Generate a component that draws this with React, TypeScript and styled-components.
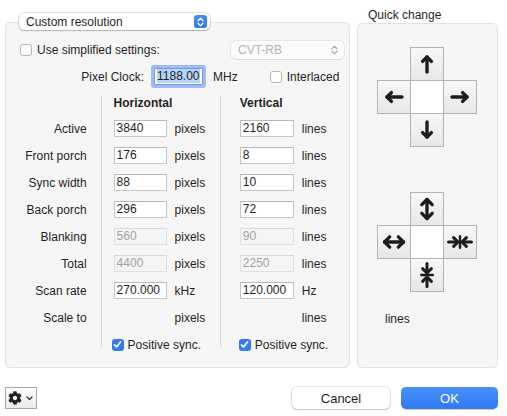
import React from 'react';
import styled, { createGlobalStyle } from 'styled-components';
import { FaCog } from 'react-icons/fa';

const GlobalStyle = createGlobalStyle`
  html, body {
    margin: 0;
    padding: 0;
    background: #ffffff;
  }
  body {
    font-family: "Liberation Sans", Arial, sans-serif;
    font-size: 12px;
    color: #1f1f1f;
  }
  * {
    box-sizing: border-box;
  }
`;

const Window = styled.div`
  width: 507px;
  height: 416px;
  display: flex;
  flex-direction: column;
  padding: 8px 9px 0 5px;
`;

const TopArea = styled.div`
  display: flex;
  align-items: flex-start;
  gap: 7px;
`;

const LeftColumn = styled.div`
  width: 345px;
  padding-top: 5px;
  display: flex;
  flex-direction: column;
`;

const RightColumn = styled.div`
  width: 141px;
  display: flex;
  flex-direction: column;
`;

const PopupButton = styled.div<{ $width: number; $disabled?: boolean }>`
  position: relative;
  z-index: 1;
  width: ${p => p.$width}px;
  height: ${p => (p.$disabled ? 18 : 17)}px;
  display: flex;
  align-items: center;
  justify-content: space-between;
  padding: 0 3px 0 7px;
  border-radius: 5px;
  background: ${p => (p.$disabled ? 'rgba(255,255,255,0.55)' : '#ffffff')};
  color: ${p => (p.$disabled ? '#b3b3b3' : '#1f1f1f')};
  box-shadow: ${p =>
    p.$disabled
      ? '0 0 0 0.5px rgba(0,0,0,0.1), 0 0.5px 1px rgba(0,0,0,0.06)'
      : '0 0 0 0.5px rgba(0,0,0,0.22), 0 1px 1.5px rgba(0,0,0,0.18)'};
`;

const TitlePopup = styled(PopupButton)`
  margin-left: 14px;
`;

const Stepper = styled.span<{ $active?: boolean }>`
  width: 13px;
  height: 13px;
  border-radius: 3px;
  background: ${p => (p.$active ? 'linear-gradient(#4a8ff8, #2a78f5)' : 'transparent')};
  display: flex;
  align-items: center;
  justify-content: center;
`;

const Panel = styled.div`
  background: #f6f6f6;
  border: 1px solid #e3e3e3;
  border-radius: 5px;
`;

const MainPanel = styled(Panel)`
  margin-top: -8px;
  height: 346px;
  padding: 17px 5px 9px 0;
  display: flex;
  flex-direction: column;
`;

const OptionRow = styled.div`
  height: 19px;
  display: flex;
  align-items: center;
  justify-content: space-between;
  padding-left: 14px;
`;

const Inline = styled.label`
  display: flex;
  align-items: center;
  gap: 5px;
`;

const ClockRow = styled.div`
  margin-top: 6px;
  height: 23px;
  display: flex;
  align-items: center;
  padding-left: 14px;
`;

const ClockLabel = styled.span`
  width: 124px;
  text-align: right;
`;

const FocusField = styled.div`
  margin-left: 10px;
  width: 49px;
  height: 17px;
  padding: 0 2px;
  line-height: 15px;
  background: #ffffff;
  border: 1px solid #6f99f1;
  box-shadow: 0 0 0 3px rgba(104, 148, 241, 0.6);
  border-radius: 1px;
`;

const Selected = styled.span`
  background: #b3d4fd;
`;

const Unit = styled.span<{ $gap?: number }>`
  margin-left: ${p => p.$gap ?? 8}px;
`;

const InterlacedBox = styled(Inline)`
  margin-left: 32px;
`;

const Check = styled.span<{ $checked?: boolean }>`
  flex: none;
  width: 12px;
  height: 12px;
  border-radius: 3px;
  display: inline-flex;
  align-items: center;
  justify-content: center;
  background: ${p => (p.$checked ? '#2f7cf6' : '#ffffff')};
  border: ${p => (p.$checked ? 'none' : '1px solid #b5b5b5')};
`;

const Table = styled.div`
  margin-top: 3px;
  display: flex;
`;

const LabelColumn = styled.div`
  width: 96px;
  padding-right: 14px;
  text-align: right;
`;

const DataColumn = styled.div<{ $width: number; $pad: number }>`
  position: relative;
  width: ${p => p.$width}px;
  padding-left: ${p => p.$pad}px;

  &::before {
    content: '';
    position: absolute;
    left: 0;
    top: 5px;
    bottom: 11px;
    width: 1px;
    background: #d9d9d9;
  }
`;

const Row = styled.div`
  height: 27px;
  display: flex;
  align-items: center;
`;

const LabelRow = styled(Row)`
  justify-content: flex-end;
`;

const HeaderRow = styled.div`
  height: 24px;
  display: flex;
  align-items: center;
  font-weight: bold;
`;

const Field = styled.div<{ $width: number; $disabled?: boolean }>`
  width: ${p => p.$width}px;
  height: 17px;
  padding: 0 2px;
  line-height: 15px;
  background: ${p => (p.$disabled ? '#f5f5f5' : '#ffffff')};
  border: 1px solid ${p => (p.$disabled ? '#e0e0e0' : '#c6c6c6')};
  border-top-color: ${p => (p.$disabled ? '#dadada' : '#b9b9b9')};
  color: ${p => (p.$disabled ? '#a3a3a3' : '#1f1f1f')};
`;

const Spacer = styled.div<{ $width: number }>`
  width: ${p => p.$width}px;
`;

const SyncRow = styled(Row)<{ $shift: number }>`
  margin-left: ${p => p.$shift}px;
  gap: 4px;
`;

const QuickLabel = styled.div`
  height: 14px;
  line-height: 14px;
  padding-left: 11px;
`;

const QuickPanel = styled(Panel)`
  margin-top: 1px;
  height: 345px;
  padding: 23px 0 0 19px;
  display: flex;
  flex-direction: column;
`;

const Cross = styled.div<{ $gap?: number }>`
  margin-top: ${p => p.$gap ?? 0}px;
  display: grid;
  grid-template-columns: 33px 33px 33px;
  grid-template-rows: 33px 33px 33px;
`;

const CrossCenter = styled.div`
  grid-area: 2 / 2;
  background: #ffffff;
`;

const CrossButton = styled.div<{ $row: number; $col: number }>`
  grid-area: ${p => p.$row} / ${p => p.$col};
  width: 34px;
  height: 34px;
  border: 1px solid #b3b3b3;
  background: linear-gradient(#f8f8f8, #e7e7e7);
  display: flex;
  align-items: center;
  justify-content: center;
`;

const ArrowSvg = styled.svg<{ $rotate: number }>`
  flex: none;
  transform: rotate(${p => p.$rotate}deg);
`;

const LinesNote = styled.div`
  margin: 21px 0 0 8px;
  line-height: 14px;
`;

const BottomBar = styled.div`
  margin-top: 19px;
  display: flex;
  align-items: center;
`;

const GearButton = styled.div`
  width: 32px;
  height: 22px;
  border: 1px solid #a9a9a9;
  background: linear-gradient(#fdfdfd, #ebebeb);
  display: flex;
  align-items: center;
  padding-left: 2px;
  gap: 4px;
  color: #222;
`;

const PushButton = styled.div<{ $primary?: boolean; $width: number }>`
  width: ${p => p.$width}px;
  height: 22px;
  border-radius: 5px;
  display: flex;
  align-items: center;
  justify-content: center;
  font-size: 13px;
  color: ${p => (p.$primary ? '#ffffff' : '#1f1f1f')};
  background: ${p => (p.$primary ? 'linear-gradient(#4a90f8, #2f7af6)' : '#ffffff')};
  box-shadow: ${p =>
    p.$primary
      ? '0 0.5px 1px rgba(0,0,0,0.2)'
      : '0 0 0 0.5px rgba(0,0,0,0.2), 0 1px 1.5px rgba(0,0,0,0.16)'};
`;

const CancelButton = styled(PushButton)`
  margin-left: auto;
`;

const OkButton = styled(PushButton)`
  margin-left: 11px;
`;

type ArrowKind = 'single' | 'double' | 'inward';

// each drawn pointing up / along the vertical axis, rotated into place
const arrowPaths: Record<ArrowKind, { d: string; w: number }[]> = {
  single: [
    { d: 'M13 21 V6', w: 3.4 },
    { d: 'M8.6 10.4 L13 6 L17.4 10.4', w: 3.4 },
  ],
  double: [
    { d: 'M13 3.5 V22.5', w: 3.3 },
    { d: 'M7.8 8.7 L13 3.5 L18.2 8.7', w: 3.3 },
    { d: 'M7.8 17.3 L13 22.5 L18.2 17.3', w: 3.3 },
  ],
  inward: [
    { d: 'M13 1.5 V10', w: 3 },
    { d: 'M8.6 6.6 L13 11 L17.4 6.6', w: 3 },
    { d: 'M13 24.5 V16', w: 3 },
    { d: 'M8.6 19.4 L13 15 L17.4 19.4', w: 3 },
    { d: 'M7.2 13 H18.8', w: 2.4 },
  ],
};

const Arrow = ({ kind, rotate }: { kind: ArrowKind; rotate: number }) => (
  <ArrowSvg $rotate={rotate} width="26" height="26" viewBox="0 0 26 26" fill="none">
    {arrowPaths[kind].map((p, i) => (
      <path
        key={i}
        d={p.d}
        stroke="#1c1c1c"
        strokeWidth={p.w}
        strokeLinecap="round"
        strokeLinejoin="round"
      />
    ))}
  </ArrowSvg>
);

const StepIcon = ({ color }: { color: string }) => (
  <svg width="7" height="10" viewBox="0 0 7 10" fill="none">
    <path d="M1 3.8 L3.5 1.3 L6 3.8 M1 6.2 L3.5 8.7 L6 6.2" stroke={color} strokeWidth="1.3" strokeLinecap="round" strokeLinejoin="round" />
  </svg>
);

const Checkbox = ({ checked }: { checked?: boolean }) => (
  <Check $checked={checked}>
    {checked && (
      <svg width="9" height="9" viewBox="0 0 9 9" fill="none">
        <path d="M1.5 4.8 L3.6 7 L7.6 1.8" stroke="#fff" strokeWidth="1.7" strokeLinecap="round" strokeLinejoin="round" />
      </svg>
    )}
  </Check>
);

interface TimingRow {
  label: string;
  h: string | null;
  v: string | null;
  hUnit: string;
  vUnit: string;
  disabled?: boolean;
}

const rows: TimingRow[] = [
  { label: 'Active', h: '3840', v: '2160', hUnit: 'pixels', vUnit: 'lines' },
  { label: 'Front porch', h: '176', v: '8', hUnit: 'pixels', vUnit: 'lines' },
  { label: 'Sync width', h: '88', v: '10', hUnit: 'pixels', vUnit: 'lines' },
  { label: 'Back porch', h: '296', v: '72', hUnit: 'pixels', vUnit: 'lines' },
  { label: 'Blanking', h: '560', v: '90', hUnit: 'pixels', vUnit: 'lines', disabled: true },
  { label: 'Total', h: '4400', v: '2250', hUnit: 'pixels', vUnit: 'lines', disabled: true },
  { label: 'Scan rate', h: '270.000', v: '120.000', hUnit: 'kHz', vUnit: 'Hz' },
  { label: 'Scale to', h: null, v: null, hUnit: 'pixels', vUnit: 'lines' },
];

type CrossItem = { row: number; col: number; kind: ArrowKind; rotate: number };

const crossOne: CrossItem[] = [
  { row: 1, col: 2, kind: 'single', rotate: 0 },
  { row: 2, col: 1, kind: 'single', rotate: 270 },
  { row: 2, col: 3, kind: 'single', rotate: 90 },
  { row: 3, col: 2, kind: 'single', rotate: 180 },
];

const crossTwo: CrossItem[] = [
  { row: 1, col: 2, kind: 'double', rotate: 0 },
  { row: 2, col: 1, kind: 'double', rotate: 90 },
  { row: 2, col: 3, kind: 'inward', rotate: 90 },
  { row: 3, col: 2, kind: 'inward', rotate: 0 },
];

const ArrowCross = ({ items, gap }: { items: CrossItem[]; gap?: number }) => (
  <Cross $gap={gap}>
    <CrossCenter />
    {items.map(it => (
      <CrossButton key={`${it.row}-${it.col}`} $row={it.row} $col={it.col}>
        <Arrow kind={it.kind} rotate={it.rotate} />
      </CrossButton>
    ))}
  </Cross>
);

const ValueColumn = ({
  title,
  width,
  pad,
  fieldWidth,
  side,
  shift,
}: {
  title: string;
  width: number;
  pad: number;
  fieldWidth: number;
  side: 'h' | 'v';
  shift: number;
}) => (
  <DataColumn $width={width} $pad={pad}>
    <HeaderRow>{title}</HeaderRow>
    {rows.map(r => {
      const value = side === 'h' ? r.h : r.v;
      return (
        <Row key={r.label}>
          {value === null ? (
            <Spacer $width={fieldWidth} />
          ) : (
            <Field $width={fieldWidth} $disabled={r.disabled}>
              {value}
            </Field>
          )}
          <Unit>{side === 'h' ? r.hUnit : r.vUnit}</Unit>
        </Row>
      );
    })}
    <SyncRow $shift={shift}>
      <Checkbox checked />
      <span>Positive sync.</span>
    </SyncRow>
  </DataColumn>
);

export default function App() {
  return (
    <>
      <GlobalStyle />
      <Window>
        <TopArea>
          <LeftColumn>
            <TitlePopup $width={191}>
              <span>Custom resolution</span>
              <Stepper $active>
                <StepIcon color="#ffffff" />
              </Stepper>
            </TitlePopup>
            <MainPanel>
              <OptionRow>
                <Inline>
                  <Checkbox />
                  <span>Use simplified settings:</span>
                </Inline>
                <PopupButton $width={113} $disabled>
                  <span>CVT-RB</span>
                  <Stepper>
                    <StepIcon color="#b0b0b0" />
                  </Stepper>
                </PopupButton>
              </OptionRow>
              <ClockRow>
                <ClockLabel>Pixel Clock:</ClockLabel>
                <FocusField>
                  <Selected>1188.00</Selected>
                </FocusField>
                <Unit $gap={10}>MHz</Unit>
                <InterlacedBox>
                  <Checkbox />
                  <span>Interlaced</span>
                </InterlacedBox>
              </ClockRow>
              <Table>
                <LabelColumn>
                  <HeaderRow />
                  {rows.map(r => (
                    <LabelRow key={r.label}>{r.label}</LabelRow>
                  ))}
                </LabelColumn>
                <ValueColumn title="Horizontal" width={121} pad={13} fieldWidth={53} side="h" shift={-2} />
                <ValueColumn title="Vertical" width={126} pad={20} fieldWidth={54} side="v" shift={-1} />
              </Table>
            </MainPanel>
          </LeftColumn>
          <RightColumn>
            <QuickLabel>Quick change</QuickLabel>
            <QuickPanel>
              <ArrowCross items={crossOne} />
              <ArrowCross items={crossTwo} gap={46} />
              <LinesNote>lines</LinesNote>
            </QuickPanel>
          </RightColumn>
        </TopArea>
        <BottomBar>
          <GearButton>
            <FaCog size={14} />
            <svg width="7" height="5" viewBox="0 0 7 5" fill="none">
              <path d="M1 1 L3.5 3.5 L6 1" stroke="#333" strokeWidth="1.2" strokeLinecap="round" strokeLinejoin="round" />
            </svg>
          </GearButton>
          <CancelButton $width={98}>Cancel</CancelButton>
          <OkButton $width={97} $primary>
            OK
          </OkButton>
        </BottomBar>
      </Window>
    </>
  );
}
